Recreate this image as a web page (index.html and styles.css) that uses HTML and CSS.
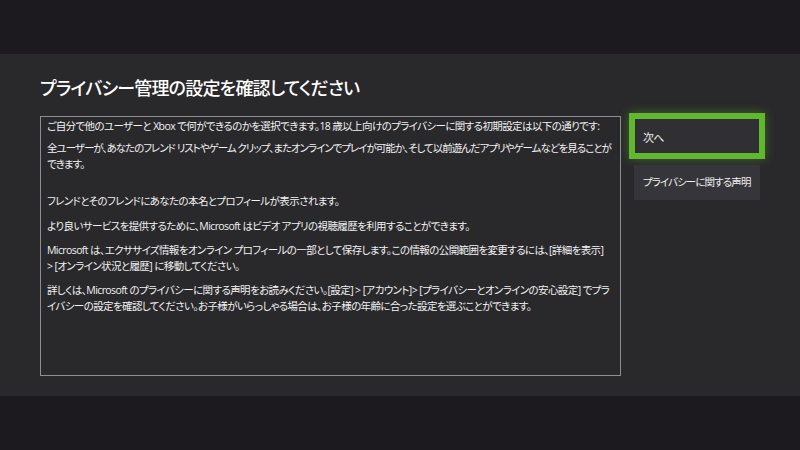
FILE: index.html
```html
<!DOCTYPE html>
<html lang="ja">
<head>
  <meta charset="UTF-8">
  <title>プライバシー管理の設定</title>
  <link rel="stylesheet" href="styles.css">
</head>
<body>
  <div class="top"></div>
  <div class="panel">
    <div class="main">
      <h1 class="title">プライバシー管理の設定を確認してください</h1>
      <div class="textbox">
        <p class="first">ご自分で他のユーザーと Xbox で何ができるのかを選択できます。18 歳以上向けのプライバシーに関する初期設定は以下の通りです:</p>
        <p class="tight">全ユーザーが、あなたのフレンド リストやゲーム クリップ、またオンラインでプレイが可能か、そして以前遊んだアプリやゲームなどを見ることが<br>できます。</p>
        <p class="blank"></p>
        <p class="friends">フレンドとそのフレンドにあなたの本名とプロフィールが表示されます。</p>
        <p>より良いサービスを提供するために、Microsoft はビデオ アプリの視聴履歴を利用することができます。</p>
        <p>Microsoft は、エクササイズ情報をオンライン プロフィールの一部として保存します。この情報の公開範囲を変更するには、[詳細を表示]<br>&gt; [オンライン状況と履歴] に移動してください。</p>
        <p>詳しくは、Microsoft のプライバシーに関する声明をお読みください。[設定] &gt; [アカウント]&gt; [プライバシーとオンラインの安心設定] でプラ<br>イバシーの設定を確認してください。お子様がいらっしゃる場合は、お子様の年齢に合った設定を選ぶことができます。</p>
      </div>
    </div>
    <div class="side">
      <div class="btn btn-next">次へ</div>
      <div class="btn btn-link">プライバシーに関する声明</div>
    </div>
  </div>
</body>
</html>
```
FILE: styles.css
```css
/* 全体 */
body {
  margin: 0;
  background: #1c1a1e;
  color: #f2f2f2;
  font-family: 'Open Sans', 'Noto Sans CJK JP', sans-serif;
  font-feature-settings: "palt";
  width: 800px;
  height: 450px;
  overflow: hidden;
}
.top { height: 54px; }
.panel {
  height: 342px;
  background: #29282b;
  display: flex;
  box-sizing: border-box;
  padding: 21px 0 0 40px;
}
.main { width: 581px; }
.title {
  margin: 0 0 15px;
  font-size: 18px;
  letter-spacing: -0.8px;
  line-height: 26px;
  font-weight: 500;
  color: #fff;
}
.textbox {
  height: 260px;
  box-sizing: border-box;
  border: 1px solid #8e8d90;
  padding: 1px 6px;
  font-size: 10.5px;
  letter-spacing: -0.6px;
  line-height: 16px;
}
.textbox p { margin: 0 0 8px; }
.textbox p.first { margin-bottom: 6px; }
.textbox p.tight { letter-spacing: -1px; white-space: nowrap; }
.textbox p.blank { height: 13px; margin: 0; }
.textbox p.friends { margin-bottom: 9px; }
/* 右側ボタン */
.side {
  margin-left: 8px;
  padding-top: 38px;
  display: flex;
  flex-direction: column;
  align-items: flex-start;
}
.btn {
  font-size: 10.5px;
  letter-spacing: -0.9px;
  white-space: nowrap;
  color: #f0f0f0;
  box-sizing: border-box;
}
.btn-next {
  width: 136px;
  height: 46px;
  border: 6px solid #5fb82e;
  background: #302f33;
  padding: 3px 8px 0;
  line-height: 31px;
  font-size: 11px;
  box-shadow: 0 0 10px rgba(95, 184, 46, 0.45);
}
.btn-link {
  margin: 6px 0 0 5px;
  width: 126px;
  height: 35px;
  background: #363539;
  padding: 0 9px;
  line-height: 35px;
}
```
